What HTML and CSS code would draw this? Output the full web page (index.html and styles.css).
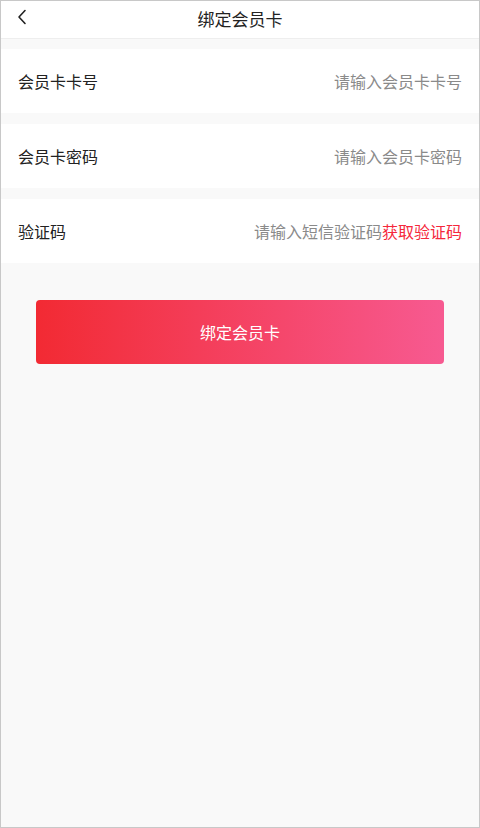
FILE: index.html
```html
<!DOCTYPE html>
<html lang="zh-CN">
<head>
<meta charset="utf-8">
<title>绑定会员卡</title>
<link rel="stylesheet" href="styles.css">
</head>
<body>
<div class="screen">
  <header class="topbar">
    <span class="back">
      <svg width="10" height="16" viewBox="0 0 10 16"><polyline points="8,1.5 2,8 8,14.5" fill="none" stroke="#222" stroke-width="1.6" stroke-linecap="round" stroke-linejoin="round"/></svg>
    </span>
    <h1 class="title">绑定会员卡</h1>
  </header>
  <div class="form">
    <div class="row">
      <span class="label">会员卡卡号</span>
      <span class="placeholder">请输入会员卡卡号</span>
    </div>
    <div class="row">
      <span class="label">会员卡密码</span>
      <span class="placeholder">请输入会员卡密码</span>
    </div>
    <div class="row">
      <span class="label">验证码</span>
      <span class="right"><span class="placeholder">请输入短信验证码</span><span class="code">获取验证码</span></span>
    </div>
  </div>
  <div class="actions">
    <button class="submit">绑定会员卡</button>
  </div>
</div>
</body>
</html>
```

FILE: styles.css
```css
html, body {
  margin: 0;
  padding: 0;
}
body {
  font-family: "Noto Sans CJK SC", "Noto Sans", sans-serif;
  background: #f9f9f9;
}
.screen {
  box-sizing: border-box;
  width: 480px;
  height: 828px;
  border: 1px solid #c8c8c8;
  background: #f9f9f9;
  overflow: hidden;
}
.topbar {
  box-sizing: border-box;
  height: 38px;
  padding-bottom: 3px;
  background: #fff;
  border-bottom: 1px solid #eeeeee;
  display: flex;
  align-items: center;
  justify-content: center;
  position: relative;
}
.back {
  position: absolute;
  left: 16px;
  top: 8px;
  display: flex;
}
.title {
  margin: 0;
  font-size: 17px;
  font-weight: 400;
  color: #222;
  line-height: 1;
}
.form {
  display: flex;
  flex-direction: column;
  gap: 11px;
  padding-top: 10px;
}
.row {
  height: 64px;
  background: #fff;
  display: flex;
  align-items: center;
  justify-content: space-between;
  padding: 0 17px;
  font-size: 16px;
}
.label {
  color: #222;
}
.placeholder {
  color: #8a8a8a;
}
.code {
  color: #f5283c;
}
.actions {
  padding: 37px 35px 0;
}
.submit {
  width: 100%;
  height: 64px;
  border: none;
  border-radius: 4px;
  background: linear-gradient(to right, #f22a33, #f75a91);
  color: #fff;
  font-family: inherit;
  font-size: 16px;
  padding: 0;
}
```
